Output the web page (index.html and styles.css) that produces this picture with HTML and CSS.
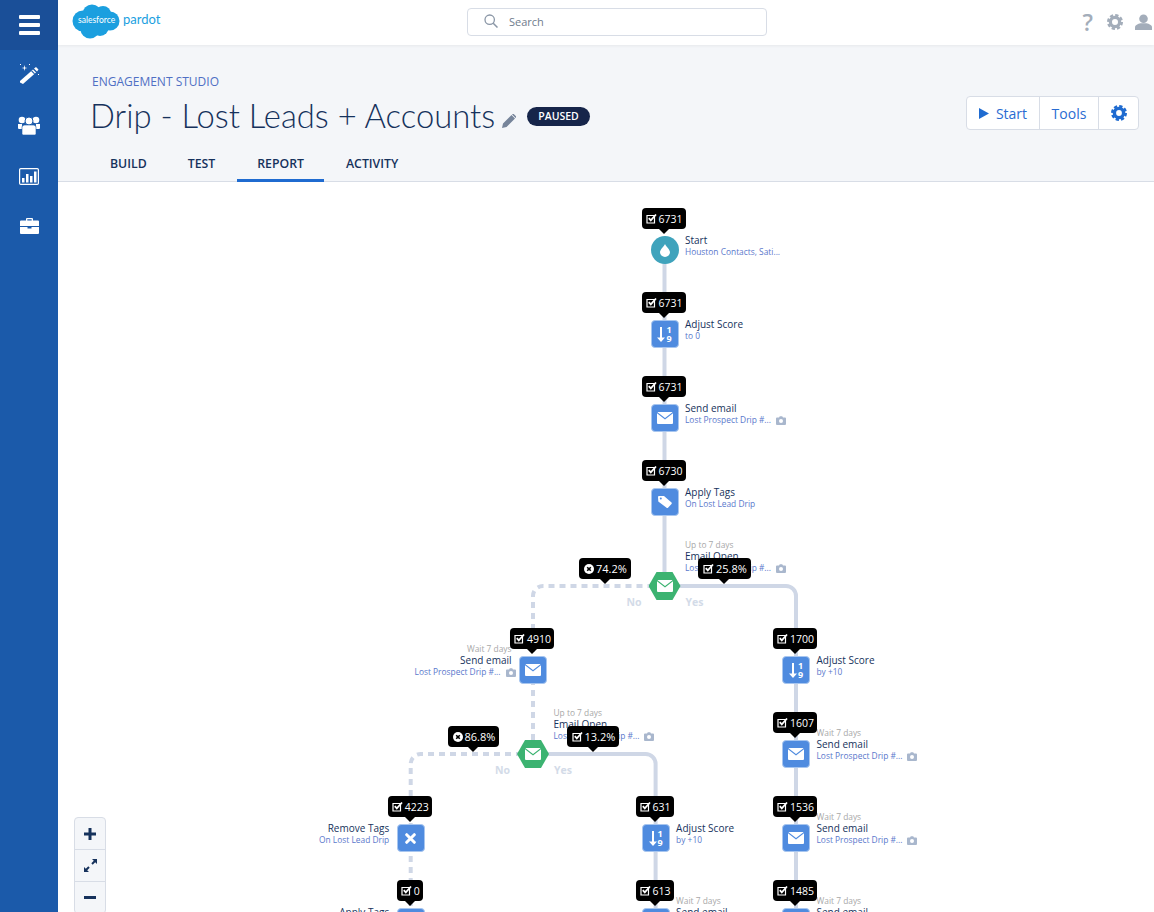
FILE: index.html
```html
<!DOCTYPE html>
<html lang="en">
<head>
<meta charset="utf-8">
<title>Engagement Studio</title>
<link rel="stylesheet" href="styles.css">
</head>
<body>
<svg class="defs" aria-hidden="true">
  <symbol id="i-mail" viewBox="0 0 16 12"><path fill="#fff" d="M0 1.200 8 7.400l8-6.200V11a1 1 0 0 1-1 1H1a1 1 0 0 1-1-1zM1 0h14a1 1 0 0 1 .5.2L8 6 .5.2A1 1 0 0 1 1 0z"/></symbol>
  <symbol id="i-check" viewBox="0 0 11 11"><path fill="none" stroke="#fff" stroke-width="1.200" d="M1 2.500h7.500v7.500H1z"/><path fill="none" stroke="#fff" stroke-width="1.800" d="M2.800 5.200l2 2.200L10 1.500"/></symbol>
  <symbol id="i-x" viewBox="0 0 10 10"><circle cx="5" cy="5" r="5" fill="#fff"/><path stroke="#000" stroke-width="1.600" d="M3.200 3.200l3.600 3.600M6.800 3.200l-3.600 3.600"/></symbol>
  <symbol id="i-cam" viewBox="0 0 10 9"><path fill="#a9b7cd" d="M1 1.500h2L3.800.3h2.400L7 1.500h2a1 1 0 0 1 1 1V8a1 1 0 0 1-1 1H1a1 1 0 0 1-1-1V2.500a1 1 0 0 1 1-1z"/><circle cx="5" cy="5" r="2" fill="#fff"/></symbol>
  <symbol id="i-score" viewBox="0 0 8 15"><path fill="#fff" d="M3 0h2v10.500h3L4 15 0 10.500h3z"/></symbol>
</svg>

<div class="app">
  <nav class="sidebar">
    <div class="burger"><span></span><span></span><span></span></div>
    <a class="nav-item nav-first">
      <svg width="22" height="20" viewBox="0 0 22 20"><path fill="#fff" d="M2 17 15 5.500l3 3L5 20l-3-1.500z"/><path fill="#1b5aaa" d="M13.200 7.200l.8-.7 3 3-.8.700z"/><path fill="#fff" d="M16 4.500l2-1.500 2.500 2.500-1.500 2zM6.500 1l.6 2.400 2.400.6-2.400.6-.6 2.400-.6-2.400L3.500 4l2.400-.6zM2 0h1v1H2zM11 0h1v1h-1zM20 10h1v1h-1z"/></svg>
    </a>
    <a class="nav-item">
      <svg width="22" height="20" viewBox="0 0 22 20"><circle cx="4" cy="5" r="3.300" fill="#fff"/><circle cx="18" cy="5" r="3.300" fill="#fff"/><path fill="#fff" d="M0 9h4v5H1a1 1 0 0 1-1-1zM22 9h-4v5h3a1 1 0 0 0 1-1z"/><circle cx="11" cy="6" r="4" fill="#fff" stroke="#1b5aaa"/><path fill="#fff" stroke="#1b5aaa" stroke-width=".6" d="M4 12c0-1.500 2-2 4-2h6c2 0 4 .5 4 2v6.500a1.500 1.500 0 0 1-1.500 1.500h-11A1.500 1.500 0 0 1 4 18.500z"/></svg>
    </a>
    <a class="nav-item nav-chart">
      <svg width="20" height="17" viewBox="0 0 20 17"><rect x=".6" y=".6" width="18.800" height="15.800" rx="1.200" fill="none" stroke="#fff" stroke-width="1.200"/><path fill="#fff" d="M3 10h2.500v4.500H3zM7 6h2.500v8.500H7zM11 8h2.500v6.500H11zM15 3.500h2.500v11H15z"/></svg>
    </a>
    <a class="nav-item nav-last">
      <svg width="19" height="16" viewBox="0 0 19 16"><path fill="#fff" d="M6 2.500V1a1 1 0 0 1 1-1h5a1 1 0 0 1 1 1v1.500h-1.300V1.300H7.300v1.200zM1 2.500h17a1 1 0 0 1 1 1V8H0V3.500a1 1 0 0 1 1-1zM0 9h7.500v1.500h4V9H19v6a1 1 0 0 1-1 1H1a1 1 0 0 1-1-1z"/></svg>
    </a>
  </nav>

  <div class="main">
    <header class="topbar">
      <div class="logo">
        <div class="cloud">
          <svg width="48" height="35" viewBox="0 0 48 35"><g fill="#1b9fdf"><circle cx="11" cy="17" r="10.500"/><circle cx="20" cy="10" r="9.500"/><circle cx="31" cy="10" r="8"/><circle cx="38" cy="17" r="9.500"/><circle cx="28" cy="23" r="9"/><circle cx="18" cy="25" r="9.500"/></g></svg>
          <span class="cloud-text">salesforce</span>
        </div>
        <span class="pardot">pardot</span>
      </div>
      <div class="search">
        <svg width="14" height="14" viewBox="0 0 14 14"><circle cx="5.700" cy="5.700" r="4.700" fill="none" stroke="#8a96a6" stroke-width="1.300"/><path stroke="#8a96a6" stroke-width="1.500" d="M9.200 9.200 13.500 13.500"/></svg>
        <span>Search</span>
      </div>
      <div class="utils">
        <span class="help">?</span>
        <svg width="16" height="16" viewBox="0 0 16 16"><circle cx="8" cy="8" r="4.600" fill="none" stroke="#a3adba" stroke-width="3.200"/><circle cx="8" cy="8" r="6.800" fill="none" stroke="#a3adba" stroke-width="2.400" stroke-dasharray="3.300 2.040"/></svg>
        <svg width="17" height="16" viewBox="0 0 17 16"><circle cx="8.500" cy="4.800" r="4.300" fill="#a3adba"/><path fill="#a3adba" d="M0 13.500c0-2.500 3-3.500 5.500-4.200h6c2.500.7 5.500 1.700 5.500 4.200V16H0z"/></svg>
      </div>
    </header>

    <section class="page-head">
      <div class="head-row">
        <div class="head-text">
          <div class="eyebrow">ENGAGEMENT STUDIO</div>
          <div class="title-row">
            <h1>Drip - Lost Leads + Accounts</h1>
            <svg class="pencil" width="14" height="14" viewBox="0 0 14 14"><path fill="#76849a" d="M0 14l1-4.500L9.500 1l3.500 3.500L4.500 13zM10.500 0a1 1 0 0 1 1.200 0L14 2.300a1 1 0 0 1 0 1.200l-.4.400L10.100.4z"/></svg>
            <span class="badge">PAUSED</span>
          </div>
        </div>
        <div class="btn-group">
          <button class="btn btn-start"><svg width="10" height="11" viewBox="0 0 10 11"><path fill="#1f6bd0" d="M0 0l10 5.500L0 11z"/></svg>Start</button>
          <button class="btn btn-tools">Tools</button>
          <button class="btn btn-gear"><svg width="16" height="16" viewBox="0 0 16 16"><circle cx="8" cy="8" r="4.600" fill="none" stroke="#1f6bd0" stroke-width="3.400"/><circle cx="8" cy="8" r="6.800" fill="none" stroke="#1f6bd0" stroke-width="2.400" stroke-dasharray="3.300 2.040"/></svg></button>
        </div>
      </div>
      <div class="tabs">
        <a class="tab">BUILD</a>
        <a class="tab">TEST</a>
        <a class="tab active">REPORT</a>
        <a class="tab">ACTIVITY</a>
      </div>
    </section>

    <section class="canvas">
      <svg class="wires" width="1096" height="730" viewBox="0 0 1096 730" fill="none">
        <path class="wire" d="M606.500 68V404"/>
        <path class="wire" d="M606.500 404H728a10 10 0 0 1 10 10V740"/>
        <path class="wire dash" d="M606.500 404H485a10 10 0 0 0-10 10V572"/>
        <path class="wire" d="M475 572H587.600a10 10 0 0 1 10 10V740"/>
        <path class="wire dash" d="M475 572H362.700a10 10 0 0 0-10 10V740"/>
      </svg>

      <div class="node col-a row-1">
        <div class="label right"><b>Start</b><small>Houston Contacts, Sati...</small></div>
        <div class="icon round"><svg width="10" height="13" viewBox="0 0 10 13"><path fill="#fff" d="M5 0c1 2.500 5 5.500 5 8.300A5 4.700 0 0 1 0 8.300C0 5.500 4 2.500 5 0z"/></svg></div>
        <div class="tip"><svg class="tick"><use href="#i-check"/></svg>6731</div>
      </div>
      <div class="node col-a row-2">
        <div class="label right"><b>Adjust Score</b><small>to 0</small></div>
        <div class="icon"><svg class="g-arrow"><use href="#i-score"/></svg><span class="digits">1<br>9</span></div>
        <div class="tip"><svg class="tick"><use href="#i-check"/></svg>6731</div>
      </div>
      <div class="node col-a row-3">
        <div class="label right"><b>Send email</b><small>Lost Prospect Drip #...<svg class="cam"><use href="#i-cam"/></svg></small></div>
        <div class="icon"><svg class="g-mail"><use href="#i-mail"/></svg></div>
        <div class="tip"><svg class="tick"><use href="#i-check"/></svg>6731</div>
      </div>
      <div class="node col-a row-4">
        <div class="label right"><b>Apply Tags</b><small>On Lost Lead Drip</small></div>
        <div class="icon"><svg width="14" height="12" viewBox="0 0 14 12"><path fill="#fff" d="M1 0h5l7.500 6.500a1 1 0 0 1 0 1.400L10 11.700a1 1 0 0 1-1.400 0L.3 5.500 0 1a1 1 0 0 1 1-1z"/><circle cx="2.800" cy="2.500" r="1" fill="#4f8bdf"/></svg></div>
        <div class="tip"><svg class="tick"><use href="#i-check"/></svg>6730</div>
      </div>
      <div class="node col-a row-5">
        <div class="label right raised"><i>Up to 7 days</i><b>Email Open</b><small>Lost Prospect Drip #...<svg class="cam"><use href="#i-cam"/></svg></small></div>
        <div class="hex"><svg class="g-mail"><use href="#i-mail"/></svg></div>
        <span class="branch no">No</span><span class="branch yes">Yes</span>
        <div class="tip pct left-pct"><svg class="xmark"><use href="#i-x"/></svg>74.2%</div>
        <div class="tip pct right-pct"><svg class="tick"><use href="#i-check"/></svg>25.8%</div>
      </div>

      <div class="node col-b row-6">
        <div class="label left"><i>Wait 7 days</i><b>Send email</b><small>Lost Prospect Drip #...<svg class="cam"><use href="#i-cam"/></svg></small></div>
        <div class="icon"><svg class="g-mail"><use href="#i-mail"/></svg></div>
        <div class="tip"><svg class="tick"><use href="#i-check"/></svg>4910</div>
      </div>
      <div class="node col-b row-7">
        <div class="label right raised"><i>Up to 7 days</i><b>Email Open</b><small>Lost Prospect Drip #...<svg class="cam"><use href="#i-cam"/></svg></small></div>
        <div class="hex"><svg class="g-mail"><use href="#i-mail"/></svg></div>
        <span class="branch no">No</span><span class="branch yes">Yes</span>
        <div class="tip pct left-pct"><svg class="xmark"><use href="#i-x"/></svg>86.8%</div>
        <div class="tip pct right-pct"><svg class="tick"><use href="#i-check"/></svg>13.2%</div>
      </div>

      <div class="node col-c row-6">
        <div class="label right"><b>Adjust Score</b><small>by +10</small></div>
        <div class="icon"><svg class="g-arrow"><use href="#i-score"/></svg><span class="digits">1<br>9</span></div>
        <div class="tip"><svg class="tick"><use href="#i-check"/></svg>1700</div>
      </div>
      <div class="node col-c row-7">
        <div class="label right"><i>Wait 7 days</i><b>Send email</b><small>Lost Prospect Drip #...<svg class="cam"><use href="#i-cam"/></svg></small></div>
        <div class="icon"><svg class="g-mail"><use href="#i-mail"/></svg></div>
        <div class="tip"><svg class="tick"><use href="#i-check"/></svg>1607</div>
      </div>
      <div class="node col-c row-8">
        <div class="label right"><i>Wait 7 days</i><b>Send email</b><small>Lost Prospect Drip #...<svg class="cam"><use href="#i-cam"/></svg></small></div>
        <div class="icon"><svg class="g-mail"><use href="#i-mail"/></svg></div>
        <div class="tip"><svg class="tick"><use href="#i-check"/></svg>1536</div>
      </div>
      <div class="node col-c row-9">
        <div class="label right"><i>Wait 7 days</i><b>Send email</b><small>Lost Prospect Drip #...</small></div>
        <div class="icon"></div>
        <div class="tip"><svg class="tick"><use href="#i-check"/></svg>1485</div>
      </div>

      <div class="node col-d row-8">
        <div class="label right"><b>Adjust Score</b><small>by +10</small></div>
        <div class="icon"><svg class="g-arrow"><use href="#i-score"/></svg><span class="digits">1<br>9</span></div>
        <div class="tip"><svg class="tick"><use href="#i-check"/></svg>631</div>
      </div>
      <div class="node col-d row-9">
        <div class="label right"><i>Wait 7 days</i><b>Send email</b><small>Lost Prospect Drip #...</small></div>
        <div class="icon"></div>
        <div class="tip"><svg class="tick"><use href="#i-check"/></svg>613</div>
      </div>

      <div class="node col-e row-8">
        <div class="label left"><b>Remove Tags</b><small>On Lost Lead Drip</small></div>
        <div class="icon"><svg width="11" height="11" viewBox="0 0 11 11"><path stroke="#fff" stroke-width="3" stroke-linecap="round" d="M1.700 1.700l7.600 7.600M9.300 1.700l-7.600 7.600"/></svg></div>
        <div class="tip"><svg class="tick"><use href="#i-check"/></svg>4223</div>
      </div>
      <div class="node col-e row-9">
        <div class="label left"><b>Apply Tags</b><small>On Lost Lead Drip</small></div>
        <div class="icon"></div>
        <div class="tip"><svg class="tick"><use href="#i-check"/></svg>0</div>
      </div>

      <div class="zoom-ctl">
        <button class="zoom-btn"><svg width="12" height="12" viewBox="0 0 12 12"><path fill="#16325c" d="M4.500 0h3v4.500H12v3H7.500V12h-3V7.500H0v-3h4.500z"/></svg></button>
        <button class="zoom-btn"><svg width="13" height="13" viewBox="0 0 13 13"><path fill="#16325c" d="M8 0h5v5l-1.800-1.800-2.500 2.500-1.400-1.400 2.500-2.500zM5 13H0V8l1.800 1.800 2.500-2.500 1.400 1.400-2.500 2.500z"/></svg></button>
        <button class="zoom-btn"><svg width="12" height="3" viewBox="0 0 12 3"><path fill="#16325c" d="M0 0h12v3H0z"/></svg></button>
      </div>
    </section>
  </div>
</div>
</body>
</html>
```
FILE: styles.css
```css
* { box-sizing: border-box; }
html, body { margin: 0; height: 100%; overflow: hidden; }
body { font-family: "Open Sans", "Liberation Sans", sans-serif; color: #16325c; background: #fff; }
.defs { position: absolute; width: 0; height: 0; }
.app { display: flex; height: 912px; }

/* sidebar */
.sidebar { width: 58px; flex: none; background: #1b5aaa; display: flex; flex-direction: column; align-items: center; }
.burger { width: 58px; height: 50px; background: #1a4f98; display: flex; flex-direction: column; justify-content: center; align-items: center; gap: 4px; }
.burger span { width: 21px; height: 4px; background: #fff; border-radius: 1px; }
.nav-item { height: 51px; width: 58px; display: flex; align-items: center; justify-content: center; }
.nav-first { margin-top: -2px; }
.nav-chart { margin-top: 1px; }
.nav-last { margin-top: -2px; }

/* top bar */
.main { flex: 1; min-width: 0; display: flex; flex-direction: column; }
.topbar { height: 45px; flex: none; background: #fff; box-shadow: 0 1px 3px rgba(0,0,0,.06); position: relative; display: flex; align-items: flex-start; padding-left: 14px; }
.logo { display: flex; align-items: center; width: 395px; height: 44px; }
.cloud { position: relative; width: 48px; height: 35px; margin-top: -1px; }
.cloud-text { position: absolute; left: 6px; top: 11px; font-size: 8.5px; color: #fff; font-family: "Lato", sans-serif; }
.pardot { font-family: "Lato", sans-serif; font-size: 13px; color: #1b9fdf; margin-left: 3px; margin-top: -6px; }
.search { width: 300px; height: 28px; margin-top: 8px; border: 1px solid #d8dde6; border-radius: 4px; display: flex; align-items: center; gap: 11px; padding: 0 0 2px 16px; font-size: 11px; color: #6f7c8d; }
.utils { margin-left: auto; display: flex; align-items: center; gap: 12px; height: 44px; padding-right: 2px; }
.help { font-size: 23px; font-weight: 600; color: #a3adba; line-height: 1; margin-right: 2px; }

/* page head */
.page-head { height: 137px; flex: none; background: #f4f6f9; border-bottom: 1px solid #d8dde6; padding: 0 15px 0 33px; display: flex; flex-direction: column; justify-content: space-between; }
.head-row { display: flex; justify-content: space-between; align-items: flex-start; padding-top: 29px; }
.eyebrow { font-size: 12px; line-height: 16px; color: #4f6fc4; margin-left: 1px; }
.title-row { display: flex; align-items: center; margin-top: 6px; margin-left: -1px; }
h1 { margin: 0; font-family: "Lato", sans-serif; font-weight: 300; font-size: 32.8px; line-height: 40px; color: #16325c; white-space: nowrap; }
.pencil { margin: 9px 0 0 7px; }
.badge { margin: 1px 0 0 11px; background: #16254a; color: #fff; font-size: 10.5px; font-weight: 600; line-height: 19px; height: 19px; border-radius: 10px; padding: 0 11px; }
.btn-group { display: flex; margin-top: 22px; border: 1px solid #d8dde6; border-radius: 4px; background: #fff; height: 34px; }
.btn { font: inherit; font-size: 14px; color: #2a6cd2; background: none; border: 0; border-left: 1px solid #d8dde6; height: 32px; padding: 0; display: flex; align-items: center; justify-content: center; }
.btn:first-child { border-left: 0; }
.btn-start { width: 72px; gap: 7px; }
.btn-tools { width: 59px; }
.btn-gear { width: 40px; }
.tabs { display: flex; margin-left: -1px; }
.tab { height: 36px; line-height: 36px; padding: 0 21px; font-size: 12.3px; font-weight: 600; color: #16325c; margin-bottom: -1px; }
.tab:first-child { padding: 0 20px; }
.tab.active { border-bottom: 3px solid #1f6bd0; padding: 0 20px; margin: 0 1px -1px; }

/* canvas */
.canvas { position: relative; flex: 1; overflow: hidden; background: #fff; }
.wires { position: absolute; left: 0; top: 0; }
.wire { stroke: #cfd7e6; stroke-width: 4; }
.wire.dash { stroke-dasharray: 6 5; }

.node { position: absolute; width: 0; height: 0; }
.col-a { left: 606.5px; }
.col-b { left: 475px; }
.col-c { left: 738px; }
.col-d { left: 597.6px; }
.col-e { left: 352.7px; }
.row-1 { top: 68px; }
.row-2 { top: 152px; }
.row-3 { top: 236px; }
.row-4 { top: 320px; }
.row-5 { top: 404px; }
.row-6 { top: 488px; }
.row-7 { top: 572px; }
.row-8 { top: 656px; }
.row-9 { top: 740px; }

.icon { position: absolute; left: -14px; top: -14px; width: 28px; height: 28px; background: #4f8bdf; border: 1px solid #a8c6ef; border-radius: 4px; display: flex; align-items: center; justify-content: center; gap: 1px; }
.icon.round { background: #3fa3bc; border: 0; border-radius: 50%; }
.g-mail { width: 16px; height: 12px; }
.g-arrow { width: 8px; height: 15px; }
.digits { color: #fff; font-size: 9px; font-weight: 700; line-height: 9px; text-align: center; }
.hex { position: absolute; left: -16px; top: -14px; width: 32px; height: 28px; background: #3cb371; clip-path: polygon(25% 0, 75% 0, 100% 50%, 75% 100%, 25% 100%, 0 50%); display: flex; align-items: center; justify-content: center; }

.label { position: absolute; bottom: -8px; white-space: nowrap; display: flex; flex-direction: column; font-size: 10px; }
.label.right { left: 20.5px; align-items: flex-start; }
.label.left { right: 21.5px; align-items: flex-end; }
.label.raised { bottom: 12px; }
.label b { font-weight: 500; line-height: 12px; color: #16325c; }
.label small { font-size: 8.4px; line-height: 12px; color: #5a78cc; display: flex; align-items: center; }
.label i { font-style: normal; font-size: 8.4px; line-height: 11px; color: #a8a8a8; }
.cam { width: 10px; height: 9px; margin: 0 -4px 0 5px; }

.tip { position: absolute; bottom: 21px; left: -1px; transform: translateX(-50%); height: 21px; background: #000; color: #fff; border-radius: 4px; font-size: 10.5px; font-weight: 500; display: flex; align-items: center; gap: 2px; padding: 0 3px 0 4px; white-space: nowrap; z-index: 2; }
.tip::after { content: ""; position: absolute; left: 50%; bottom: -5px; margin-left: -5px; border: 5px solid transparent; border-bottom: 0; border-top-color: #000; }
.tick { width: 11px; height: 11px; flex: none; }
.xmark { width: 10px; height: 10px; flex: none; }
.tip.pct { bottom: 7px; transform: none; font-size: 11px; padding: 0 4px 0 5px; }
.tip.left-pct { left: -85.5px; }
.tip.right-pct { left: 33.5px; }
.branch { position: absolute; top: 10px; font-size: 10.5px; font-weight: 700; line-height: 12px; color: #d3dbe8; }
.branch.no { left: -38px; }
.branch.yes { left: 21px; }

.zoom-ctl { position: absolute; left: 16px; top: 635px; width: 32px; border: 1px solid #d8dde6; border-radius: 4px; background: #f4f6f9; display: flex; flex-direction: column; }
.zoom-btn { height: 32px; padding: 0; background: none; border: 0; border-top: 1px solid #d8dde6; display: flex; align-items: center; justify-content: center; }
.zoom-btn:first-child { border-top: 0; height: 31px; }
```
